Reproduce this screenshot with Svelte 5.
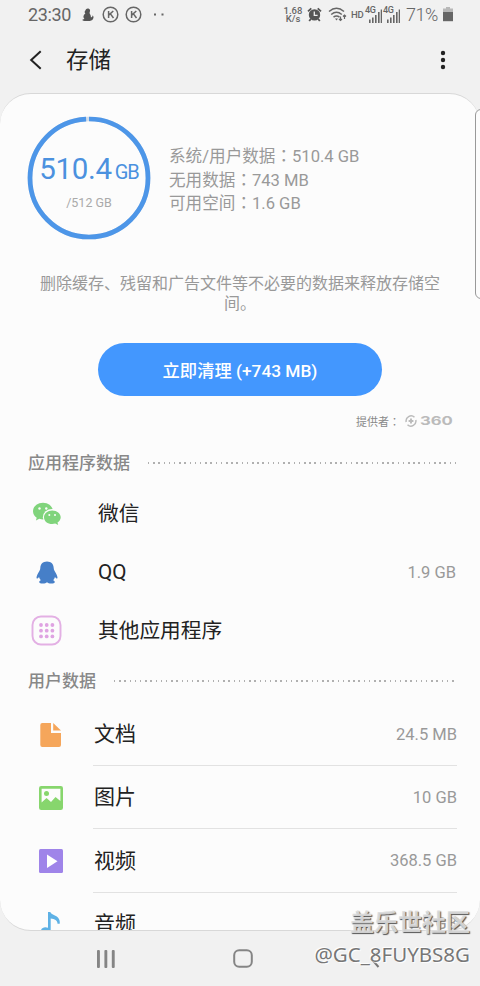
<script>
  const stats = [
    ['系统/用户数据', '510.4 GB'],
    ['无用数据', '743 MB'],
    ['可用空间', '1.6 GB']
  ];
  const apps = [
    { icon: 'wechat', name: '微信', size: '' },
    { icon: 'qq', name: 'QQ', size: '1.9 GB' },
    { icon: 'apps', name: '其他应用程序', size: '' }
  ];
  const files = [
    { icon: 'doc', name: '文档', size: '24.5 MB' },
    { icon: 'image', name: '图片', size: '10 GB' },
    { icon: 'video', name: '视频', size: '368.5 GB' },
    { icon: 'audio', name: '音频', size: '7.8 GB' }
  ];
  const grid = [10, 15.7, 21.4];
</script>

{#snippet kicon()}
  <svg class="k" width="17" height="17" viewBox="0 0 17 17" fill="none" stroke="#666">
    <circle cx="8.5" cy="8.5" r="7.3" stroke-width="1.5" />
    <path d="M6.6 5v7M11.3 5 7 8.9M8.4 7.9l3.1 4.1" stroke-width="1.5" />
  </svg>
{/snippet}

{#snippet signal()}
  <span class="sig">
    <span class="g4">4G</span>
    <svg width="18" height="17" viewBox="0 0 18 17" fill="#666">
      <path d="M4 12.5h1.6V16H4zM7 10.5h1.6V16H7zM10 8h1.6v8H10zM13 5h1.6v11H13zM15.7 2.5h1.3V16h-1.3z" />
    </svg>
  </span>
{/snippet}

{#snippet icon(name)}
  {#if name === 'wechat'}
    <svg width="30" height="24" viewBox="0 0 30 24">
      <path fill="#80d47c" d="M11 .8C5.400.8 1 4.600 1 9.300c0 2.700 1.500 5 3.700 6.500l-.8 2.800 3.400-1.800c1.200.4 2.400.6 3.700.6 5.500 0 10-3.700 10-8.200S16.500.8 11 .8z" />
      <ellipse cx="20.200" cy="15.200" rx="9.300" ry="8.300" fill="#fcfcfc" />
      <path fill="#80d47c" d="M20.200 8.400c-4.600 0-8.200 3-8.200 6.800 0 3.900 3.600 6.900 8.200 6.900 1.100 0 2.100-.2 3-.5l3 1.500-.7-2.500c2-1.300 3.200-3.200 3.200-5.400 0-3.800-3.700-6.800-8.500-6.800z" />
      <g fill="#fcfcfc"><circle cx="7.500" cy="6.500" r="1.200" /><circle cx="14.300" cy="6.500" r="1.200" /><circle cx="17.300" cy="13" r="1" /><circle cx="23" cy="13" r="1" /></g>
    </svg>
  {:else if name === 'qq'}
    <svg width="22" height="23" viewBox="0 0 22 23">
      <path fill="#467fc8" d="M11 .5C6.800.5 4.300 3.300 4.300 7c0 1.200-.3 2-.9 3C2 12.200.5 14.800.5 16.700c0 1.300 1.200.8 2.500-.8.300 1.300 1 2.400 1.900 3.300-1 .4-1.700 1-1.700 1.700 0 1.200 1.600 1.600 3.700 1.600 1.800 0 3.200-.5 4.100-1.300.9.800 2.300 1.300 4.100 1.300 2.100 0 3.700-.4 3.700-1.600 0-.7-.7-1.300-1.700-1.700.9-.9 1.600-2 1.900-3.300 1.300 1.600 2.500 2.100 2.500.8 0-1.900-1.500-4.500-2.900-6.700-.6-1-.9-1.800-.9-3C17.700 3.300 15.200.5 11 .5z" />
    </svg>
  {:else if name === 'apps'}
    <svg width="31" height="31" viewBox="0 0 31 31">
      <rect x="1.500" y="1.500" width="28" height="28" rx="8.500" fill="none" stroke="#e3b0e4" stroke-width="1.900" />
      {#each grid as y}{#each grid as x}<circle cx={x} cy={y} r="1.900" fill="#dfa3e2" />{/each}{/each}
    </svg>
  {:else if name === 'doc'}
    <svg width="24" height="26" viewBox="0 0 24 26" fill="#f5a65b">
      <path d="M3.300 1H12v10h10v12a2 2 0 0 1-2 2H3.300a2 2 0 0 1-2-2V3a2 2 0 0 1 2-2z" /><path d="M14.200 1 22 8.600h-7.800z" />
    </svg>
  {:else if name === 'image'}
    <svg width="24" height="24" viewBox="0 0 24 24">
      <rect width="24" height="24" rx="2.200" fill="#87d66d" /><path fill="#fcfcfc" d="M2.600 2.700h18.800V15L16.500 11 12 16l-4.500-4L2.600 16.500z" /><circle cx="7.500" cy="7.500" r="2.500" fill="#87d66d" />
    </svg>
  {:else if name === 'video'}
    <svg width="24" height="24" viewBox="0 0 24 24">
      <rect width="24" height="24" rx="1.500" fill="#9f84e9" /><path fill="#fff" d="m8 5.500 10.500 6.700L8 19z" />
    </svg>
  {:else}
    <svg width="22" height="26" viewBox="0 0 22 26">
      <path fill="#5eb1e5" d="M8 1h2.300c.8 2.500 4.200 2.700 6.500 4.500 2.500 2 3.300 4.500 2.900 7.200h-2.200c.2-3-2.700-5.200-6.800-5.300V20c0 3-2 5-5 5S.8 23.300.8 20.500s2.200-4.300 4.600-4.300c1 0 1.800.2 2.600.6z" />
    </svg>
  {/if}
{/snippet}

<div class="screen">
  <div class="status">
    <span class="time">23:30</span>
    <svg class="sq" width="12" height="14" viewBox="0 0 12 14" fill="#555"><path d="M4 1.300C5 0 7.500.3 8 2c.3 1.300-.6 2-.4 3.200.6 1.300 1.400 2.300 1.300 4 1.200.4 1.600-.3 1.500-1.600.8.200 1.200 1 1.100 2-.2 2-1.700 3.200-3.700 3.500H2.500C.8 13 .1 12.200.6 11.600l1.800-.6C.8 9.500 1.200 7 3.300 5.600L2.500 4z"/></svg>
    {@render kicon()}
    {@render kicon()}
    <svg class="more" width="10" height="3" viewBox="0 0 10 3" fill="#666"><path d="M0 .5h2v2H0zM7.500.5h2v2h-2z" /></svg>
    <div class="right">
      <span class="speed"><b>1.68</b><b>K/s</b></span>
      <svg class="alarm" width="15" height="15" viewBox="0 0 15 15"><g fill="none" stroke="#555" stroke-width="1.800"><path d="M1 4.300 4.300 1.300M10.700 1.300 14 4.300M3.800 12l-1.600 2M11.200 12l1.600 2" /></g><circle cx="7.500" cy="7.900" r="5.700" fill="#555" /><path d="M7.300 4.500v3.900h3.300" fill="none" stroke="#f1f1f1" stroke-width="1.300" /></svg>
      <svg class="wifi" width="19" height="15" viewBox="0 0 19 15" fill="none" stroke="#666" stroke-width="1.500"><path d="M1 4.500q7.500-6.500 15 0M3.200 7.500q5.300-4.500 10.600 0M5.500 10.200q3-2.300 6 0"/><path d="M7 11.500h3L8.500 13.500z" fill="#666" stroke="none"/><path d="M12.500 9.500v4M11 12l1.500 1.500L14 12M16.500 12V8M15 9.500 16.500 8 18 9.500" stroke-width="1.200"/></svg>
      <span class="hd">HD</span>
      {@render signal()}
      {@render signal()}
      <span class="pct">71%</span>
      <svg class="bat" width="10" height="15" viewBox="0 0 10 15"><path d="M3 0h4v1.500h3V6H0V1.500h3z" fill="#b8b8b8" /><path d="M0 5h10v9.200H0z" fill="#666" /></svg>
    </div>
  </div>

  <header>
    <svg width="14" height="20" viewBox="0 0 14 20" fill="none" stroke="#222" stroke-width="2"><path d="M11.700 1.200 2.200 10l9.500 8.800" /></svg>
    <h1>存储</h1>
    <svg class="dots" width="6" height="20" viewBox="0 0 6 20" fill="#222"><circle cx="3" cy="3" r="2.200" /><circle cx="3" cy="10" r="2.200" /><circle cx="3" cy="17" r="2.200" /></svg>
  </header>

  <main>
    <section class="overview">
      <div class="ring">
        <svg width="124" height="124" viewBox="0 0 124 124"><circle cx="62" cy="62" r="59" fill="none" stroke="#d4dde8" stroke-width="4.700" /><circle cx="62" cy="62" r="59" fill="none" stroke="#4d96e8" stroke-width="4.700" pathLength="100" stroke-dasharray="99.200 .8" transform="rotate(-90 62 62)" /></svg>
        <div class="reading">
          <div class="used">510.4<span>GB</span></div>
          <div class="total">/512 GB</div>
        </div>
      </div>
      <div class="stats">
        {#each stats as [label, value]}
          <div>{label}<span class="colon">：</span>{value}</div>
        {/each}
      </div>
    </section>

    <p class="hint">删除缓存、残留和广告文件等不必要的数据来释放存储空<br />间。</p>
    <button>立即清理 (+743 MB)</button>
    <div class="provider">
      <span>提供者<span class="colon">：</span></span>
      <svg width="12" height="12" viewBox="0 0 12 12" fill="none" stroke="#bbb" stroke-width="1.500"><path d="M1.200 7A5 5 0 0 1 9.500 2.300M10.800 5A5 5 0 0 1 2.500 9.700" /><path d="M6 3.600v4.800M3.600 6h4.800" stroke-width="1.900" /></svg>
      <span class="brand"><b>360</b></span>
    </div>

    <h2 class="first">应用程序数据<i></i></h2>
    {#each apps as row}
      <div class="app">
        <span class="ic">{@render icon(row.icon)}</span>
        <span class="name">{row.name}</span>
        <span class="size">{row.size}</span>
      </div>
    {/each}

    <h2 class="second">用户数据<i></i></h2>
    {#each files as row}
      <div class="file">
        <span class="ic">{@render icon(row.icon)}</span>
        <div class="body"><span class="name">{row.name}</span><span class="size">{row.size}</span></div>
      </div>
    {/each}
  </main>

  <nav>
    <svg width="18" height="18" viewBox="0 0 18 18" fill="#858585"><rect x="0" width="2.900" height="18" rx="1" /><rect x="7.400" width="2.900" height="18" rx="1" /><rect x="14.800" width="2.900" height="18" rx="1" /></svg>
    <svg width="20" height="19" viewBox="0 0 20 19" fill="none" stroke="#858585" stroke-width="2"><rect x="1.200" y="1.200" width="17.600" height="16.600" rx="5" /></svg>
    <svg width="10" height="18" viewBox="0 0 10 18" fill="none" stroke="#777" stroke-width="2"><path d="M8.500 1 1.500 9l7 8" /></svg>
  </nav>

  <div class="edge"></div>
  <div class="mark"><div class="site">盖乐世社区</div><div class="user">@GC_8FUYBS8G</div></div>
</div>

<style>
  :global(body) { margin: 0; background: #f1f1f1; }
  .screen { position: relative; width: 480px; height: 986px; overflow: hidden; background: #f1f1f1; color: #222; font-family: Roboto, "Noto Sans CJK SC", sans-serif; display: flex; flex-direction: column; }
  svg { display: block; flex: none; }
  * { box-sizing: border-box; }
  .status { height: 29px; display: flex; align-items: center; padding: 0 27px 0 28px; color: #666; }
  .time { font-size: 18px; width: 54px; letter-spacing: -.35px; }
  .sq { margin-right: 8px; }
  .k { margin-right: 5.500px; }
  .more { margin-left: 7px; }
  .right { margin-left: auto; display: flex; align-items: center; }
  .speed { display: flex; flex-direction: column; align-items: center; font-size: 9.500px; line-height: 8px; width: 20px; margin-right: 4px; }
  .speed b { font-weight: 500; }
  .alarm { margin-right: 6px; }
  .wifi { margin-right: 4px; }
  .hd { font-size: 9.500px; font-weight: 500; width: 14px; letter-spacing: -.3px; }
  .sig { display: block; position: relative; width: 18px; height: 17px; margin-top: -3px; top: 2px; }
  .g4 { position: absolute; left: 0; top: -1px; font-size: 9px; line-height: 9px; font-weight: 500; letter-spacing: -.3px; background: #f1f1f1; }
  .pct { font-size: 18px; font-weight: 300; margin: 0 4px 0 5px; width: 33px; letter-spacing: -.5px; }
  header { height: 64px; display: flex; align-items: center; padding: 1px 34px 3px 29px; }
  h1 { margin: 0 0 0 23px; font-size: 22.500px; line-height: 30px; font-weight: 400; }
  .dots { margin-left: auto; }
  main { height: 838px; flex: none; overflow: hidden; background: #fcfcfc; border: 1px solid #d8d8d8; border-width: 1px 0; border-radius: 31px; display: flex; flex-direction: column; }
  main > * { flex: none; }
  .overview { display: flex; padding: 22px 0 0 27px; height: 146px; }
  .ring { display: grid; width: 124px; height: 124px; margin-right: 18px; }
  .ring > * { grid-area: 1 / 1; }
  .reading { text-align: center; padding-top: 36px; }
  .used { color: #4b91df; font-size: 29.500px; line-height: 34px; white-space: nowrap; letter-spacing: -.3px; }
  .used span { font-size: 20px; letter-spacing: -1px; margin-left: 3px; }
  .total { color: #aaa; font-size: 12.500px; line-height: 16px; margin-top: 6px; }
  .stats { padding-top: 28px; color: #999; font-size: 16.600px; line-height: 23.500px; white-space: nowrap; }
  .colon { font-family: "Noto Sans CJK TC", sans-serif; }
  .stats div { height: 23.500px; }
  .hint { margin: 34px 0 0; height: 41px; color: #999; text-align: center; font-size: 16px; line-height: 19.500px; }
  button { margin: 28px 0 0 98px; width: 284px; height: 53px; border: 0; padding: 0; border-radius: 27px; background: #4397fe; color: #fff; font: 500 17.300px Roboto, "Noto Sans CJK SC", sans-serif; white-space: nowrap; }
  .provider { height: 20px; margin-top: 15px; padding: 0 28px 0 356px; display: flex; align-items: center; color: #888; font-size: 11px; }
  .provider > span:first-child { width: 50px; white-space: nowrap; }
  .brand { width: 32px; margin-left: 3px; color: #bbb; font-family: Inter, sans-serif; font-size: 11.500px; line-height: 12px; }
  .brand b { display: inline-block; transform: scaleX(1.450); transform-origin: left; }
  h2 { margin: 0; display: flex; align-items: center; padding: 0 23px 0 28px; font-size: 17px; line-height: 24px; font-weight: 500; color: #888; }
  h2 i { flex: 1; height: 2px; margin-left: 18px; background: repeating-linear-gradient(90deg, #b0b0b0 0 1.500px, transparent 1.500px 5.200px); }
  .first { margin-top: 20px; margin-bottom: 10px; }
  .second { margin-top: 9px; margin-bottom: 10px; }
  .app { height: 58.300px; display: flex; align-items: center; padding-right: 24px; }
  .app .ic { width: 93px; margin-right: 5px; display: grid; justify-items: center; }
  .name { font-size: 20.700px; line-height: 30px; }
  .size { margin-left: auto; color: #999; font-size: 16.500px; }
  .file { height: 63.300px; display: flex; align-items: center; }
  .file .ic { width: 93px; padding-left: 9px; display: grid; justify-items: center; }
  .file .body { flex: 1; align-self: stretch; margin-right: 23px; display: flex; align-items: center; padding-left: 1px; border-bottom: 1px solid #e2e2e2; }
  .file .name { font-size: 21px; }
  nav { height: 55px; display: flex; justify-content: space-between; align-items: center; padding: 0 100px 0 97px; }
  .edge { position: absolute; right: -8px; top: 109px; width: 13px; height: 190px; border: 1px solid #999; border-radius: 6px; background: #fcfcfc; }
  .mark { position: absolute; right: 10px; top: 907px; width: 165px; text-align: right; white-space: nowrap; }
  .site { font-size: 24px; line-height: 32px; font-weight: 700; color: #ddde; text-shadow: 1px 1px 1px #555, 0 0 2px #fff; }
  .user { font-family: "Noto Sans", sans-serif; font-size: 20.500px; line-height: 30px; color: #777; text-shadow: -1px -1px 1px #fff, 1px 1px 1px #fff; }
</style>
